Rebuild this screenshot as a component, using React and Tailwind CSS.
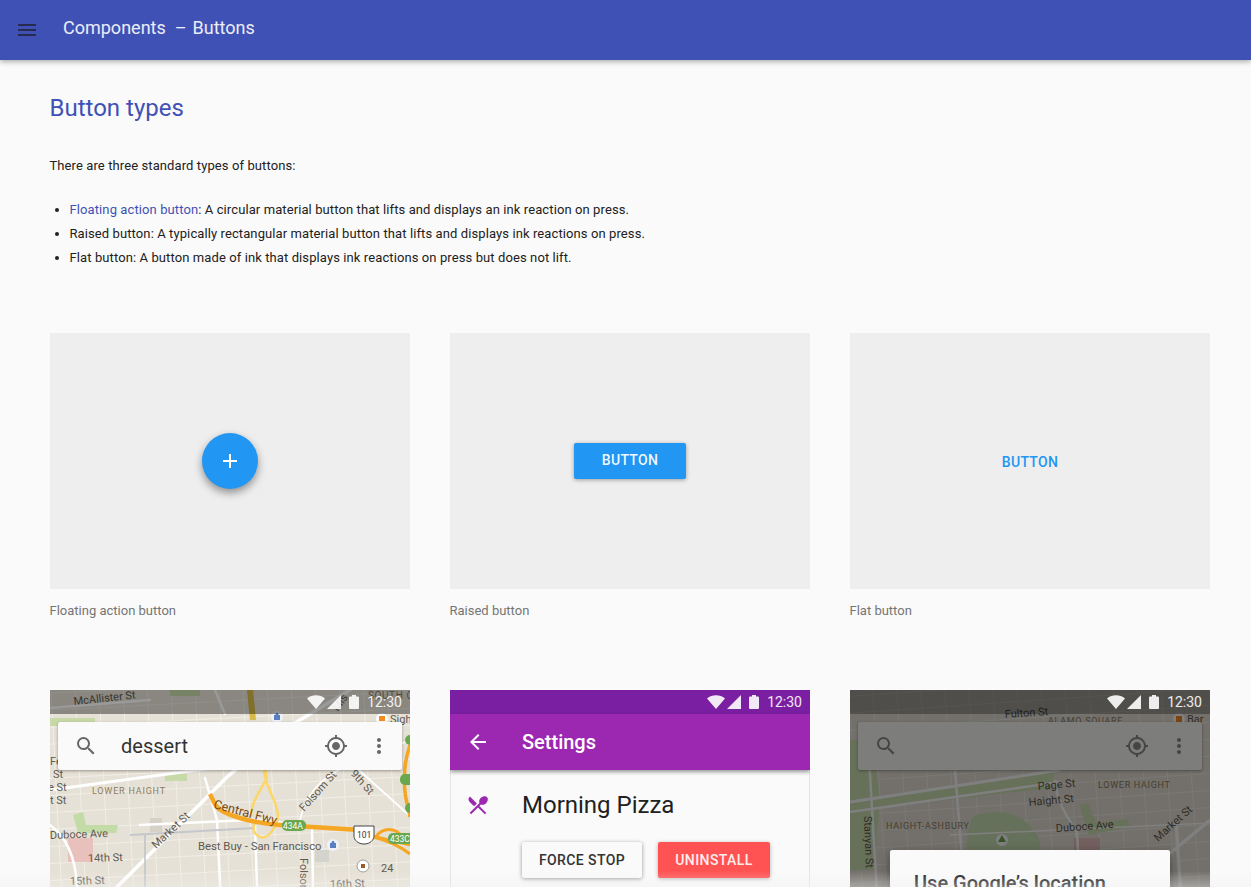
import React from 'react';
import {
  MdMenu,
  MdAdd,
  MdSearch,
  MdMyLocation,
  MdMoreVert,
  MdArrowBack,
  MdRestaurantMenu,
} from 'react-icons/md';

// --- Small map drawings ---
const range = (from, to, step) => {
  const out = [];
  for (let i = from; i <= to; i += step) out.push(i);
  return out;
};

const StreetGrid = ({ angle = 3, color = '#f1eee6' }) => (
  <g stroke={color} strokeWidth="1" transform={`rotate(${angle} 180 128)`}>
    {range(-40, 400, 24).map((x) => (
      <line key={`v${x}`} x1={x} y1="-40" x2={x} y2="300" />
    ))}
    {range(-40, 300, 17).map((y) => (
      <line key={`h${y}`} x1="-40" y1={y} x2="400" y2={y} />
    ))}
  </g>
);

const Label = ({ x, y, size = 11, rotate = 0, fill = '#5f5a50', spacing = 0, children }) => (
  <text
    x={x}
    y={y}
    fontSize={size}
    fill={fill}
    letterSpacing={spacing}
    fontFamily="Roboto, sans-serif"
    transform={rotate ? `rotate(${rotate} ${x} ${y})` : undefined}
  >
    {children}
  </text>
);

const DessertMap = () => (
  <svg viewBox="0 0 360 256" className="absolute inset-0 w-full h-full bg-[#e6e1d6]">
    <StreetGrid angle={-3} />
    <path d="M0 28h45v8H0zM120 0h30v6h-30z" fill="#c8d9a8" />
    <path d="M23 125l5 18h38l2-8H36l-3-13z" fill="#c3dba6" />
    <path d="M115 84h22v7h-22z" fill="#c8d9a8" />
    <rect x="18" y="148" width="25" height="24" fill="#e8c0bc" />
    <rect x="265" y="160" width="14" height="12" fill="#d5d3cd" />
    <rect x="100" y="128" width="12" height="14" fill="#d5d1c7" />
    <g stroke="#fff" fill="none" strokeLinecap="round">
      <path d="M67 197L177 87l58-48L300 0" strokeWidth="3.5" />
      <path d="M0 100l162-22 48-3" strokeWidth="3" />
      <path d="M155 88l12 42 6 126M205 136l4 120M262 140l2 116" strokeWidth="2.5" />
      <path d="M0 135c10 8 22 20 26 50l8 71" strokeWidth="2.5" />
      <path d="M90 135l110-5 35 3M0 18l100-8M165 0l10 24" strokeWidth="2.5" />
      <path d="M250 130c6-28 24-48 60-58l50-22" strokeWidth="1.6" />
      <path d="M300 72l60 54" strokeWidth="2" />
    </g>
    <path d="M80 145l125-7" stroke="#c5c7cc" strokeWidth="2" fill="none" />
    <path d="M95 145v111" stroke="#bcc0c6" strokeWidth="1.5" fill="none" />
    <path d="M200 0l3 30" stroke="#d8b94a" strokeWidth="6" fill="none" />
    <g fill="none" stroke="#fcd667" strokeLinecap="round">
      <path d="M213 72l3 16" strokeWidth="4" />
      <path d="M216 90c-6 10-15 24-15 36M216 90c2 10 12 24 12 36-1 8-8 24-18 21-6-2-8-9-5-14" strokeWidth="2.5" />
    </g>
    <path d="M160 104c4 8 5 14 14 18 14 7 32 11 56 13l80 5" fill="none" stroke="#f5a623" strokeWidth="4.5" />
    <path d="M310 143l50 12M326 147c6-10 20-10 26 0M320 146c16 4 30 10 40 18" fill="none" stroke="#f5a623" strokeWidth="3" />
    <path d="M360 55c-6 16-8 42-2 62l2 10" fill="none" stroke="#f5a623" strokeWidth="3.5" />
    <Label x={24} y={15} rotate={-6}>McAllister St</Label>
    <Label x={3} y={88}>St</Label>
    <Label x={-2} y={101}>e St</Label>
    <Label x={0} y={114}>t St</Label>
    <Label x={0} y={75}>Fe</Label>
    <Label x={42} y={104} size={9} spacing={0.8} fill="#8d7d5f">LOWER HAIGHT</Label>
    <Label x={0} y={149} rotate={-2}>Duboce Ave</Label>
    <Label x={38} y={172} rotate={-2}>14th St</Label>
    <Label x={20} y={195} rotate={-2}>15th St</Label>
    <Label x={106} y={159} rotate={-43}>Market St</Label>
    <Label x={254} y={122} rotate={-48}>Folsom St</Label>
    <Label x={300} y={84} rotate={48}>9th St</Label>
    <Label x={163} y={118} size={12.5} rotate={15} fill="#7a4a10">Central Fwy</Label>
    <Label x={148} y={160} size={11.3}>Best Buy - San Francisco</Label>
    <Label x={250} y={168} rotate={90}>Folsom</Label>
    <Label x={280} y={198} rotate={-2}>16th St</Label>
    <Label x={331} y={182}>24</Label>
    <rect x="232" y="130" width="24" height="11" rx="5" fill="#6aa84f" />
    <Label x={233} y={139} size={8.5} fill="#fff">434A</Label>
    <rect x="338" y="143" width="28" height="11" rx="5" fill="#6aa84f" />
    <Label x={340} y={152} size={8.5} fill="#fff">433C</Label>
    <path d="M304 136h20v10c0 4-4 8-10 8s-10-4-10-8z" fill="#fff" stroke="#444" strokeWidth="1" />
    <Label x={307} y={148} size={8.5} fill="#333">101</Label>
    <circle cx="283" cy="155" r="6" fill="#eef1f7" />
    <path d="M280 153h6v5h-6zM281.5 153c0-3 3-3 3 0" fill="#5a7fc0" />
    <circle cx="227" cy="27" r="6" fill="#eef1f7" />
    <path d="M224 25h6v5h-6zM225.500 25c0-3 3-3 3 0" fill="#5a7fc0" />
    <circle cx="313" cy="176" r="6" fill="#fff" stroke="#888" strokeWidth="0.8" />
    <rect x="311" y="174" width="4" height="4" fill="#9a5b2c" />
    <circle cx="332" cy="29" r="6" fill="#fff" />
    <rect x="329" y="26" width="6" height="5" fill="#f58b1f" />
    <Label x={340} y={33}>Sigh</Label>
    <Label x={318} y={9} size={10} spacing={0.6} fill="#8d7d5f">SOUTH O</Label>
    <Label x={288} y={22} rotate={-55}>Mis</Label>
    <circle cx="360" cy="50" r="5" fill="#6aa84f" />
    <circle cx="360" cy="118" r="5" fill="#6aa84f" />
    <rect x="350" y="84" width="14" height="11" rx="5" fill="#6aa84f" />
  </svg>
);

const LocationMap = () => (
  <svg viewBox="0 0 360 256" className="absolute inset-0 w-full h-full bg-[#e6e1d6]">
    <StreetGrid angle={-4} color="#f3f0e8" />
    <path d="M0 50h22l8 60-6 70H0z" fill="#cfe2b4" />
    <path d="M15 108l190-26-4 16L28 118z" fill="#cfe2b4" />
    <path d="M125 125c30-8 50 0 62 20 12 20-10 30-25 45l-20 30-20-30c-6-18-10-50 3-65z" fill="#cde3b6" />
    <path d="M230 115l8 30 42-8-2-8-32 4-8-20z" fill="#cfe2b4" />
    <rect x="224" y="148" width="26" height="26" fill="#e8c0bc" />
    <g stroke="#fff" fill="none">
      <path d="M0 112l210-32" strokeWidth="3" />
      <path d="M0 122l210-30" strokeWidth="2.5" />
      <path d="M18 50l12 206M105 80l14 176" strokeWidth="2.5" />
      <path d="M205 90c2 24 12 36 22 52l6 114" strokeWidth="2.5" />
      <path d="M300 180l60-50M326 130l8 126" strokeWidth="3.500" />
      <path d="M100 145l260-12" strokeWidth="1.5" />
    </g>
    <Label x={155} y={28} rotate={-4}>Fulton St</Label>
    <Label x={198} y={34} size={9} spacing={0.7} fill="#8d7d5f">ALAMO SQUARE</Label>
    <Label x={188} y={100} rotate={-5}>Page St</Label>
    <Label x={179} y={116} rotate={-5}>Haight St</Label>
    <Label x={248} y={98} size={9} spacing={0.7} fill="#8d7d5f">LOWER HAIGHT</Label>
    <Label x={36} y={139} size={9} spacing={0.7} fill="#8d7d5f">HAIGHT-ASHBURY</Label>
    <Label x={206} y={142} rotate={-4}>Duboce Ave</Label>
    <Label x={14} y={126} rotate={88}>Stanyan St</Label>
    <Label x={308} y={152} rotate={-42}>Market St</Label>
    <Label x={244} y={172} rotate={-2}>14th St</Label>
    <Label x={337} y={33}>Bar</Label>
    <circle cx="329" cy="29" r="6" fill="#fff" />
    <rect x="326" y="26" width="6" height="6" fill="#f58b1f" />
    <circle cx="152" cy="150" r="6" fill="#fff" />
    <path d="M152 145l4 7h-8z" fill="#6aa84f" />
  </svg>
);

// --- Android chrome pieces ---
const StatusBar = ({ className = '' }) => (
  <div className={`relative flex items-center justify-end h-6 pr-2 text-[14px] text-white/90 ${className}`}>
    <svg width="18" height="14" viewBox="0 0 18 14" fill="currentColor">
      <path d="M0 3.500C5-.8 13-.8 18 3.500L9 14z" />
    </svg>
    <svg width="14" height="14" viewBox="0 0 14 14" fill="currentColor" className="ml-[2px]">
      <path d="M14 0v14H0z" />
    </svg>
    <svg width="10" height="14" viewBox="0 0 10 14" fill="currentColor" className="ml-[8px]">
      <path d="M3 0h4v1.500h2a1 1 0 0 1 1 1V13a1 1 0 0 1-1 1H1a1 1 0 0 1-1-1V2.500a1 1 0 0 1 1-1h2z" />
    </svg>
    <span className="ml-[8px]">12:30</span>
  </div>
);

const SearchCard = ({ query, dim }) => (
  <div
    className={`relative mx-2 mt-2 h-12 rounded-[2px] flex items-center pl-[16px] pr-[11px] shadow-[0_1px_3px_rgba(0,0,0,0.35)] ${
      dim ? 'bg-[#7d7d7b] text-[#454545]' : 'bg-[#fafafa] text-[#666]'
    }`}
  >
    <MdSearch size={24} />
    <span className="ml-[23px] text-[20px] text-[#333] flex-1">{query}</span>
    <MdMyLocation size={24} className={dim ? 'mr-[18px]' : 'mr-[19px]'} />
    <MdMoreVert size={24} />
  </div>
);

const ButtonDemo = ({ caption, children }) => (
  <div>
    <div className="h-[256px] bg-[#eeeeee] flex items-center justify-center">{children}</div>
    <p className="mt-[14px] -ml-[0.5px] text-[13px] leading-[16px] text-[#757575]">{caption}</p>
  </div>
);

const App = () => {
  return (
    <div className="relative h-[887px] overflow-hidden bg-[#fafafa] font-['Roboto',sans-serif]">
      <header className="relative z-10 h-[60px] bg-[#3f51b5] flex items-center pb-[5px] pl-[15px] shadow-[0_2px_5px_rgba(0,0,0,0.3)]">
        <MdMenu size={24} className="text-[#272b52] mt-[5px]" />
        <h1 className="ml-[24px] text-[18px] text-white/90 whitespace-pre">
          Components  –<span className="ml-[6px]">Buttons</span>
        </h1>
      </header>

      <main className="pl-[50px] pr-[41px]">
        <h2 className="pt-[32px] -ml-[0.5px] text-[24px] leading-[32px] text-[#3f51b5]">Button types</h2>

        <p className="mt-[30px] -ml-[0.5px] text-[13px] leading-[24px] tracking-[0.1px] text-[#212121]">
          There are three standard types of buttons:
        </p>
        <ul className="mt-[20px] -ml-[0.5px] pl-[20px] list-disc text-[13px] leading-[24px] tracking-[0.1px] text-[#212121]">
          <li>
            <a className="text-[#3f51b5]">Floating action button</a>: A circular material button that lifts and displays
            an ink reaction on press.
          </li>
          <li>Raised button: A typically rectangular material button that lifts and displays ink reactions on press.</li>
          <li>Flat button: A button made of ink that displays ink reactions on press but does not lift.</li>
        </ul>

        <div className="mt-[63px] grid grid-cols-3 gap-x-[40px]">
          <ButtonDemo caption="Floating action button">
            <div className="w-14 h-14 rounded-full bg-[#2196f3] flex items-center justify-center text-white shadow-[0_4px_8px_rgba(0,0,0,0.4)]">
              <MdAdd size={24} />
            </div>
          </ButtonDemo>
          <ButtonDemo caption="Raised button">
            <div className="w-[112px] h-[36px] pb-[2px] rounded-[2px] bg-[#2196f3] flex items-center justify-center text-[14px] font-medium tracking-[0.3px] text-white/95 shadow-[0_1px_4px_rgba(0,0,0,0.35)]">
              BUTTON
            </div>
          </ButtonDemo>
          <ButtonDemo caption="Flat button">
            <div className="mt-[2px] text-[14px] font-medium tracking-[0.3px] text-[#2196f3]">BUTTON</div>
          </ButtonDemo>
        </div>

        <div className="mt-[71px] grid grid-cols-3 gap-x-[40px]">
          <div className="relative h-[256px] overflow-hidden">
            <DessertMap />
            <StatusBar className="bg-black/40" />
            <SearchCard query="dessert" />
          </div>

          <div className="h-[256px] overflow-hidden bg-[#fafafa]">
            <StatusBar className="bg-[#7b1fa2]" />
            <div className="relative z-10 h-14 bg-[#9c27b0] flex items-center pl-4 text-white shadow-[0_2px_4px_rgba(0,0,0,0.4)]">
              <MdArrowBack size={24} />
              <span className="ml-[32px] text-[20px] font-medium">Settings</span>
            </div>
            <div className="h-[176px] border-x border-[#e5e5e5]">
              <div className="flex items-center h-[72px] pb-[2px] pl-[15px]">
                <MdRestaurantMenu size={24} className="text-[#9c27b0]" />
                <span className="ml-[32px] text-[24px] text-[#212121]">Morning Pizza</span>
              </div>
              <div className="flex gap-4 pl-[71px]">
                <div className="w-[120px] h-9 rounded-[2px] bg-[#fafafa] flex items-center justify-center text-[14px] font-medium tracking-[0.4px] text-[#333] shadow-[0_1px_4px_rgba(0,0,0,0.4)]">
                  FORCE STOP
                </div>
                <div className="w-[112px] h-9 rounded-[2px] bg-[#ff5252] flex items-center justify-center text-[14px] font-medium tracking-[0.4px] text-white/90 shadow-[0_1px_4px_rgba(0,0,0,0.3)]">
                  UNINSTALL
                </div>
              </div>
            </div>
          </div>

          <div className="relative h-[256px] overflow-hidden">
            <LocationMap />
            <div className="absolute inset-0 bg-black/50" />
            <StatusBar className="bg-black/30" />
            <SearchCard dim />
            <div className="absolute left-[40px] top-[160px] w-[280px] h-[96px] rounded-[2px] bg-[#fafafa] pl-6 pt-[19px] text-[20px] leading-[28px] font-medium text-[#212121] shadow-[0_4px_12px_rgba(0,0,0,0.4)]">
              Use Google’s location
            </div>
          </div>
        </div>
      </main>

      {/* fade at the bottom edge of the window */}
      <div className="absolute inset-x-0 bottom-0 h-[16px] bg-gradient-to-b from-[#f0f0f0]/0 to-[#f0f0f0]/40" />
    </div>
  );
};

export default App;
